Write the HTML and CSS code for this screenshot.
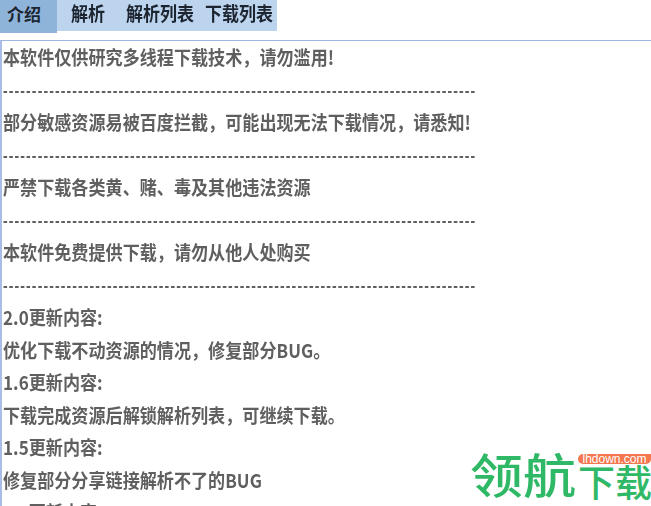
FILE: index.html
```html
<!DOCTYPE html>
<html lang="zh">
<head>
<meta charset="utf-8">
<title>介绍</title>
<link rel="stylesheet" href="styles.css">
</head>
<body>
<nav class="tabs">
  <span class="tab active">介绍</span>
  <span class="tab t2">解析</span>
  <span class="tab t3">解析列表</span>
  <span class="tab t4">下载列表</span>
</nav>
<main class="content">
  <p>本软件仅供研究多线程下载技术，请勿滥用!</p>
  <p class="dash">----------------------------------------------------------------------------------</p>
  <p>部分敏感资源易被百度拦截，可能出现无法下载情况，请悉知!</p>
  <p class="dash">----------------------------------------------------------------------------------</p>
  <p>严禁下载各类黄、赌、毒及其他违法资源</p>
  <p class="dash">----------------------------------------------------------------------------------</p>
  <p>本软件免费提供下载，请勿从他人处购买</p>
  <p class="dash">----------------------------------------------------------------------------------</p>
  <p>2.0更新内容:</p>
  <p>优化下载不动资源的情况，修复部分BUG。</p>
  <p>1.6更新内容:</p>
  <p>下载完成资源后解锁解析列表，可继续下载。</p>
  <p>1.5更新内容:</p>
  <p>修复部分分享链接解析不了的BUG</p>
  <p>1.4更新内容:</p>
</main>
<div class="logo">
  <span class="logo-big">领航</span>
  <div class="logo-side">
    <span class="logo-url">lhdown.com</span>
    <span class="logo-small">下载</span>
  </div>
</div>
</body>
</html>
```
FILE: styles.css
```css
html, body {
  margin: 0;
  padding: 0;
  height: 506px;
  overflow: hidden;
  background: #fff;
}
body {
  font-family: "Noto Sans CJK SC", sans-serif;
  position: relative;
}
.tabs {
  display: flex;
  width: 277px;
  height: 31px;
  background: #bdd4ee;
  filter: blur(0.5px);
}
.tab {
  display: block;
  font-size: 17px;
  font-weight: 700;
  line-height: 25px;
  color: #1c2430;
  white-space: nowrap;
  transform: scaleY(1.12);
}
.active {
  width: 57px;
  height: 33px;
  padding-left: 7px;
  box-sizing: border-box;
  background: #8fb4da;
  line-height: 27px;
  transform: none;
}
.t2 { margin-left: 14px; }
.t3 { margin-left: 21px; }
.t4 { margin-left: 11px; }
.content {
  margin-top: 9px;
  height: 466px;
  box-sizing: border-box;
  border-top: 1px solid #9fb6e2;
  border-left: 2px solid #a9bde6;
  padding: 0 0 0 1px;
  overflow: hidden;
}
.content p {
  margin: 0;
  height: 32.5px;
  line-height: 32.5px;
  font-size: 17.1px;
  font-weight: 700;
  color: #5f5f5f;
  white-space: nowrap;
  filter: blur(0.55px);
  transform: scaleY(1.12);
}
.content .dash {
  font-family: "Liberation Sans", sans-serif;
  font-size: 14px;
  letter-spacing: 1.11px;
}
.logo {
  position: absolute;
  left: 470px;
  top: 446px;
  display: flex;
  width: 181px;
  height: 60px;
}
.logo-big {
  font-size: 53px;
  line-height: 60px;
  font-weight: 500;
  color: #2fb866;
  white-space: nowrap;
  transform: scaleY(0.88);
  transform-origin: left top;
}
.logo-side {
  display: flex;
  flex-direction: column;
  align-items: flex-start;
  margin-left: 2px;
  padding-top: 8px;
}
.logo-url {
  width: 73px;
  height: 10px;
  border-radius: 5px 0 5px 5px;
  background: #f4774f;
  color: #fff;
  font-family: "Liberation Sans", sans-serif;
  font-size: 12px;
  line-height: 10px;
  text-align: center;
}
.logo-small {
  font-size: 37px;
  line-height: 34px;
  font-weight: 500;
  color: #2fb866;
  white-space: nowrap;
}
```
